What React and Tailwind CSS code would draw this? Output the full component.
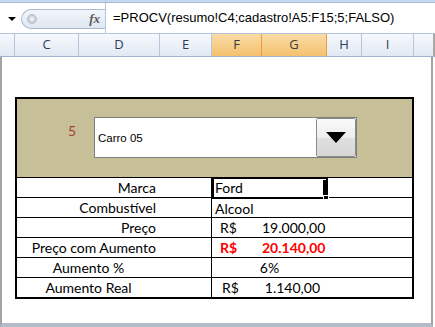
import { useState } from "react"

const cols = [
    { name: "C", w: "w-[64px]", on: false },
    { name: "D", w: "w-[81px]", on: false },
    { name: "E", w: "w-[52px]", on: false },
    { name: "F", w: "w-[50px]", on: true },
    { name: "G", w: "w-[65px]", on: true },
    { name: "H", w: "w-[35px]", on: false },
    { name: "I", w: "w-[52px]", on: false },
]

const linhas = [
    { label: "Marca", align: "right" },
    { label: "Combustível", align: "right" },
    { label: "Preço", align: "right" },
    { label: "Preço com Aumento", align: "right" },
    { label: "Aumento %", align: "center" },
    { label: "Aumento Real", align: "center" },
]

function Valor({ i }) {
    if (i === 0) {
        return (
            <div className="relative h-full">
                <span className="absolute left-[3px] top-0 leading-[20px]">Ford</span>
                <div className="absolute left-0 top-[-1px] w-[116px] h-[22px] border-2 border-black">
                    <div className="w-full h-full border border-white"></div>
                </div>
                <div className="absolute left-[111px] top-[2px] w-[4px] h-[17px] bg-black"></div>
                <div className="absolute left-[111px] top-[17px] w-[6px] h-[5px] bg-black border border-white"></div>
            </div>
        )
    }
    if (i === 1) return <span className="pl-[3px] leading-[20px]">Alcool</span>
    if (i === 2) return (
        <div className="flex leading-[20px]">
            <span className="pl-[8px] w-[50px]">R$</span>
            <span className="w-[58px] text-right">19.000,00</span>
        </div>
    )
    if (i === 3) return (
        <div className="flex leading-[20px] text-[#ff0000] font-bold">
            <span className="pl-[8px] w-[50px]">R$</span>
            <span className="w-[60px] text-right">20.140,00</span>
        </div>
    )
    if (i === 4) return <div className="w-[115px] text-center leading-[20px]">6%</div>
    return (
        <div className="flex leading-[20px]">
            <span className="pl-[10px] w-[50px]">R$</span>
            <span className="w-[58px] text-right">1.140,00</span>
        </div>
    )
}

function App() {
    const [carro] = useState("Carro 05")

    return (
        <div className="w-[435px] h-[327px] overflow-hidden bg-white flex flex-col">
            {/* faixa de cima */}
            <div className="h-[3px] bg-[#c5d7ef] border-b border-[#a5bbd8]"></div>

            {/* barra de formula */}
            <div className="h-[31px] flex items-center border-b border-[#b4c5dc] bg-white">
                <div className="w-[21px] flex justify-center pl-[2px]">
                    <div className="w-0 h-0 border-l-[4px] border-r-[4px] border-t-[4px] border-l-transparent border-r-transparent border-t-black mt-[2px]"></div>
                </div>
                <div className="w-[84px] h-[20px] mt-[1px] rounded-l-full border border-r-0 border-[#a9bad2] bg-linear-to-b from-[#f3f6fb] to-[#dfe7f2] flex items-center pl-[5px]">
                    <div className="w-[10px] h-[10px] rounded-full bg-radial from-white to-[#a7b0bd] border border-[#b8c2d0]"></div>
                    <span className="ml-auto mr-[5px] text-[13px] italic font-bold text-[#5a5a5a] leading-none" style={{ fontFamily: "'Liberation Serif', serif" }}>fx</span>
                </div>
                <div className="w-px h-full bg-[#b4c5dc]"></div>
                <span className="pl-[7px] text-[13px] text-black" style={{ fontFamily: "'Liberation Sans', sans-serif" }}>=PROCV(resumo!C4;cadastro!A5:F15;5;FALSO)</span>
            </div>

            {/* cabecalho de colunas */}
            <div className="h-[23px] flex bg-linear-to-b from-[#f6f9fd] to-[#e2e9f3] border-b border-[#9fb3cc] text-[13px] text-[#27405f]" style={{ fontFamily: "'Open Sans', sans-serif" }}>
                <div className="w-[15px] border-r border-[#b7c6da]"></div>
                {cols.map((c) => (
                    <div key={c.name} className={`${c.w} flex items-center justify-center border-r ${c.on ? "bg-linear-to-b from-[#f9dca6] to-[#f4c16d] border-[#f09a3e] text-[#3a3a3a]" : "border-[#b7c6da]"}`}>
                        {c.name}
                    </div>
                ))}
                <div className="flex-1 border-r-2 border-[#a8a8a8]"></div>
            </div>

            {/* planilha */}
            <div className="flex-1 border-l-2 border-r-2 border-[#a3a3a3] mr-[2px] border-b-4 border-b-[#b3bcc9] pl-[13px] pt-[40px]">
                <div className="w-[399px] border-2 border-black text-[14px] text-black" style={{ fontFamily: "Lato, sans-serif" }}>
                    <div className="h-[78px] bg-[#c6bf98] flex items-start">
                        <span className="w-[77px] text-right pr-[18px] mt-[21px] text-[#a0413a] text-[14px]">5</span>
                        <div className="mt-[18px] w-[263px] h-[41px] border border-[#7f7f7f] bg-white flex">
                            <span className="flex-1 flex items-center pl-[3px] pt-[3px] text-[11.5px]" style={{ fontFamily: "'Liberation Sans', sans-serif" }}>{carro}</span>
                            <div className="w-[40px] h-full border border-[#8a8a8a] rounded-[2px] flex flex-col relative">
                                <div className="h-1/2 bg-linear-to-b from-[#fafafa] to-[#eeeeee]"></div>
                                <div className="h-1/2 bg-linear-to-b from-[#e0e0e0] to-[#d6d6d6]"></div>
                                <div className="absolute inset-0 flex items-center justify-center">
                                    <div className="w-0 h-0 border-l-[10px] border-r-[10px] border-t-[11px] border-l-transparent border-r-transparent border-t-black"></div>
                                </div>
                            </div>
                        </div>
                    </div>
                    {linhas.map((l, i) => (
                        <div key={l.label} className="h-[20px] flex border-t border-black">
                            <div className="w-[195px] border-r border-black flex">
                                <div className={`w-[143px] leading-[19px] ${l.align === "right" ? "text-right pr-[4px]" : "text-center"}`}>
                                    {l.label}
                                </div>
                            </div>
                            <div className="flex-1">
                                <Valor i={i} />
                            </div>
                        </div>
                    ))}
                </div>
            </div>
        </div>
    )
}

export default App
